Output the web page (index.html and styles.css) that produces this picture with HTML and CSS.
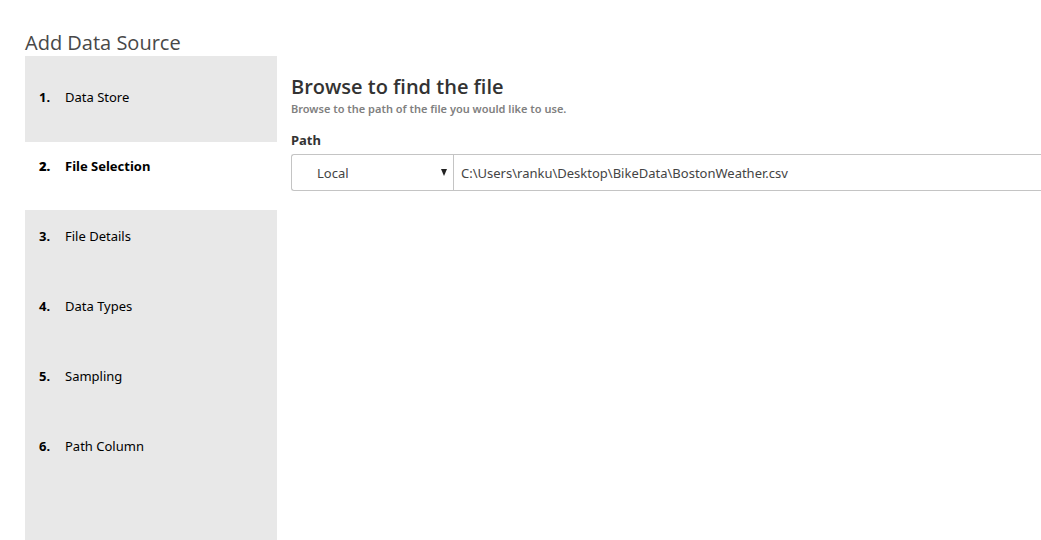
FILE: index.html
```html
<!DOCTYPE html>
<html lang="en">
<head>
<meta charset="utf-8">
<title>Add Data Source</title>
<link rel="stylesheet" href="styles.css">
</head>
<body>
<div class="page">
  <h1 class="page-title">Add Data Source</h1>
  <div class="wizard">
    <ol class="steps">
      <li class="step step-first"><b class="step-number">1.</b><span>Data Store</span></li>
      <li class="step step-active" aria-current="step"><b class="step-number">2.</b><span>File Selection</span></li>
      <li class="step"><b class="step-number">3.</b><span>File Details</span></li>
      <li class="step"><b class="step-number">4.</b><span>Data Types</span></li>
      <li class="step"><b class="step-number">5.</b><span>Sampling</span></li>
      <li class="step step-last"><b class="step-number">6.</b><span>Path Column</span></li>
    </ol>
    <main class="content">
      <h2 class="heading">Browse to find the file</h2>
      <p class="hint">Browse to the path of the file you would like to use.</p>
      <label class="label" for="path">Path</label>
      <div class="path-group">
        <div class="select-wrap">
          <select class="location" aria-label="Location"><option>Local</option></select>
          <svg class="arrow" viewBox="0 0 6 7" aria-hidden="true"><path d="M0 0h6L3 7z"/></svg>
        </div>
        <input class="path" id="path" type="text" value="C:\Users\ranku\Desktop\BikeData\BostonWeather.csv">
      </div>
    </main>
  </div>
</div>
</body>
</html>
```
FILE: styles.css
```css
* { box-sizing: border-box; }
body {
  margin: 0;
  background: #fff;
  color: #333;
  font-family: "Noto Sans", "Open Sans", sans-serif;
  font-size: 13px;
  line-height: 20px;
}
.page {
  display: flex;
  flex-direction: column;
  min-height: 100vh;
  padding: 30px 0 0 25px;
}
.page-title {
  margin: 0;
  color: #484848;
  font-family: "Open Sans", sans-serif;
  font-size: 20px;
  line-height: 26px;
  font-weight: 400;
}
.wizard { display: flex; flex: 1; }
.steps {
  display: flex;
  flex-direction: column;
  flex: 0 0 252px;
  margin: 0;
  padding: 0;
  list-style: none;
  color: #000;
}
.step {
  display: flex;
  height: 70px;
  padding: 16px 14px;
  background: #e8e8e8;
}
.step-first { height: 86px; padding-top: 31px; }
.step-active {
  height: 68px;
  padding-top: 14px;
  background: #fff;
  font-weight: 700;
}
.step-last { flex: 1; }
.step-number { width: 26px; }
.content { flex: 1; min-width: 0; padding: 16px 0 0 14px; }
.heading {
  margin: 0;
  font-family: "Open Sans", sans-serif;
  font-size: 20px;
  line-height: 30px;
  font-weight: 600;
}
.hint {
  margin: 0 0 14px;
  color: #808080;
  font-size: 11px;
  line-height: 14px;
  font-weight: 600;
}
.label { display: block; margin-bottom: 4px; font-weight: 700; }
.path-group {
  display: flex;
  height: 37px;
  border: 1px solid #c4c4c4;
  border-right: 0;
  border-radius: 3px 0 0 3px;
}
.select-wrap { position: relative; flex: 0 0 162px; border-right: 1px solid #c4c4c4; }
.location, .path {
  width: 100%;
  height: 100%;
  border: 0;
  background: none;
  color: #444;
  font: inherit;
}
.location { appearance: none; padding: 0 25px; }
.arrow { position: absolute; top: 14px; right: 6px; width: 6px; height: 7px; fill: #222; pointer-events: none; }
.path { flex: 1; min-width: 0; padding: 0 7px; }
```
